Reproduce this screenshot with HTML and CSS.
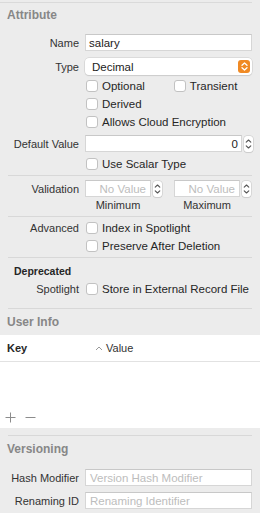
FILE: index.html
```html
<!DOCTYPE html>
<html lang="en">
<head>
  <meta charset="UTF-8">
  <title>Attribute Inspector</title>
  <link rel="stylesheet" href="styles.css">
</head>
<body>
  <div class="inspector">
    <div class="topline"></div>

    <div class="section-title title-attribute">Attribute</div>

    <div class="row field-row name-row">
      <label class="label">Name</label>
      <div class="field"><span class="value">salary</span></div>
    </div>

    <div class="row field-row type-row">
      <label class="label">Type</label>
      <div class="popup">
        <span class="value">Decimal</span>
        <span class="popup-btn">
          <svg width="7" height="9" viewBox="0 0 7 9"><path d="M1 3.3 L3.5 1 L6 3.3 M1 5.7 L3.5 8 L6 5.7" fill="none" stroke="#fff" stroke-width="1.3" stroke-linecap="round" stroke-linejoin="round"/></svg>
        </span>
      </div>
    </div>

    <div class="row check-row first-check">
      <span class="spacer"></span>
      <span class="check-item"><span class="box"></span>Optional</span>
      <span class="check-item transient"><span class="box"></span>Transient</span>
    </div>
    <div class="row check-row">
      <span class="spacer"></span>
      <span class="check-item"><span class="box"></span>Derived</span>
    </div>
    <div class="row check-row">
      <span class="spacer"></span>
      <span class="check-item"><span class="box"></span>Allows Cloud Encryption</span>
    </div>

    <div class="row field-row default-row">
      <label class="label">Default Value</label>
      <div class="field field-num"><span class="value">0</span></div>
      <span class="stepper">
        <svg width="7" height="12" viewBox="0 0 7 12"><path d="M1.2 4.2 L3.5 2 L5.8 4.2 M1.2 7.8 L3.5 10 L5.8 7.8" fill="none" stroke="#555" stroke-width="1.1" stroke-linecap="round" stroke-linejoin="round"/></svg>
      </span>
    </div>
    <div class="row check-row scalar-row">
      <span class="spacer"></span>
      <span class="check-item"><span class="box"></span>Use Scalar Type</span>
    </div>

    <div class="sep"></div>

    <div class="row field-row validation-row">
      <label class="label">Validation</label>
      <div class="range">
        <div class="field field-small"><span class="placeholder">No Value</span></div>
        <span class="stepper">
          <svg width="7" height="12" viewBox="0 0 7 12"><path d="M1.2 4.2 L3.5 2 L5.8 4.2 M1.2 7.8 L3.5 10 L5.8 7.8" fill="none" stroke="#555" stroke-width="1.1" stroke-linecap="round" stroke-linejoin="round"/></svg>
        </span>
      </div>
      <div class="range range-max">
        <div class="field field-small"><span class="placeholder">No Value</span></div>
        <span class="stepper">
          <svg width="7" height="12" viewBox="0 0 7 12"><path d="M1.2 4.2 L3.5 2 L5.8 4.2 M1.2 7.8 L3.5 10 L5.8 7.8" fill="none" stroke="#555" stroke-width="1.1" stroke-linecap="round" stroke-linejoin="round"/></svg>
        </span>
      </div>
    </div>
    <div class="row caption-row">
      <span class="spacer"></span>
      <span class="caption">Minimum</span>
      <span class="caption caption-max">Maximum</span>
    </div>

    <div class="sep sep-validation"></div>

    <div class="row check-row advanced-row">
      <label class="label">Advanced</label>
      <span class="check-item"><span class="box"></span>Index in Spotlight</span>
    </div>
    <div class="row check-row">
      <span class="spacer"></span>
      <span class="check-item"><span class="box"></span>Preserve After Deletion</span>
    </div>

    <div class="sep sep-advanced"></div>

    <div class="subtitle">Deprecated</div>
    <div class="row check-row">
      <label class="label">Spotlight</label>
      <span class="check-item"><span class="box"></span>Store in External Record File</span>
    </div>

    <div class="sep sep-deprecated"></div>

    <div class="section-title title-userinfo">User Info</div>

    <div class="table">
      <div class="table-head">
        <span class="col-key">Key</span>
        <span class="col-value">
          <svg width="8" height="5" viewBox="0 0 8 5"><path d="M1 4 L4 1 L7 4" fill="none" stroke="#9a9a9a" stroke-width="1"/></svg>
          Value
        </span>
      </div>
      <div class="table-body"></div>
      <div class="table-foot">
        <svg class="tool" width="11" height="11" viewBox="0 0 11 11"><path d="M5.5 0.5 V10.5 M0.5 5.5 H10.5" stroke="#8c8c8c" stroke-width="1"/></svg>
        <svg class="tool" width="11" height="11" viewBox="0 0 11 11"><path d="M0.5 5.5 H10.5" stroke="#8c8c8c" stroke-width="1"/></svg>
      </div>
    </div>

    <div class="sep sep-versioning"></div>

    <div class="section-title title-versioning">Versioning</div>

    <div class="row field-row hash-row">
      <label class="label">Hash Modifier</label>
      <div class="field"><span class="placeholder">Version Hash Modifier</span></div>
    </div>
    <div class="row field-row renaming-row">
      <label class="label">Renaming ID</label>
      <div class="field"><span class="placeholder">Renaming Identifier</span></div>
    </div>
  </div>
</body>
</html>
```

FILE: styles.css
```css
body {
  margin: 0;
  padding: 0;
  background-color: #ececec;
  font-family: "Liberation Sans", Arial, sans-serif;
  color: #262626;
}
.inspector {
  width: 260px;
  height: 513px;
  overflow: hidden;
}
.topline {
  height: 2px;
  border-bottom: 1px solid #dadada;
  margin-right: 8px;
}
.section-title {
  height: 25px;
  line-height: 25px;
  padding-left: 7px;
  font-size: 12px;
  font-weight: bold;
  color: #878787;
}
.row {
  display: flex;
  align-items: center;
}
.label,
.spacer {
  flex: none;
  width: 79px;
  margin-right: 6px;
  text-align: right;
  font-size: 11px;
  color: #333;
}
.field-row {
  height: 17px;
}
.name-row {
  margin-top: 6px;
}
.type-row {
  margin-top: 7px;
}
.field {
  box-sizing: border-box;
  width: 167px;
  height: 17px;
  background: #fff;
  border: 1px solid #d6d6d6;
  border-top-color: #c8c8c8;
  display: flex;
  align-items: center;
  padding: 0 3px;
  font-size: 11.5px;
}
.value {
  color: #222;
}
.placeholder {
  color: #bdbdbd;
}
.popup {
  box-sizing: border-box;
  width: 167px;
  height: 17px;
  background: #fff;
  border-radius: 4px;
  box-shadow: 0 0 0 0.5px #c9c9c9, 0 1px 1px rgba(0, 0, 0, 0.12);
  display: flex;
  align-items: center;
  justify-content: space-between;
  padding: 0 2px 0 7px;
  font-size: 11.5px;
}
.popup-btn {
  width: 12px;
  height: 13px;
  border-radius: 3px;
  background: #f08a24;
  display: flex;
  align-items: center;
  justify-content: center;
}
.check-row {
  height: 18px;
}
.first-check {
  margin-top: 2px;
}
.check-item {
  display: flex;
  align-items: center;
  font-size: 11.5px;
  color: #262626;
  white-space: nowrap;
}
.box {
  box-sizing: border-box;
  width: 12px;
  height: 12px;
  margin-left: 1px;
  margin-right: 4px;
  background: #fff;
  border: 1px solid #c2c2c2;
  border-radius: 3px;
}
.transient {
  margin-left: 28px;
}
.default-row {
  margin-top: 4px;
}
.field-num {
  width: 157px;
  justify-content: flex-end;
}
.stepper {
  box-sizing: border-box;
  width: 9px;
  height: 16px;
  margin-left: 2px;
  background: #fff;
  border-radius: 3px;
  box-shadow: 0 0 0 0.5px #c4c4c4, 0 1px 1px rgba(0, 0, 0, 0.1);
  display: flex;
  align-items: center;
  justify-content: center;
}
.scalar-row {
  margin-top: 3px;
}
.sep {
  height: 1px;
  margin: 2px 8px 0 8px;
  background: #d8d8d8;
}
.validation-row {
  margin-top: 4px;
}
.range {
  display: flex;
  align-items: center;
}
.range-max {
  margin-left: 12px;
}
.field-small {
  width: 66px;
  justify-content: flex-end;
  padding-right: 4px;
}
.caption-row {
  height: 16px;
}
.caption {
  width: 66px;
  text-align: center;
  font-size: 11px;
  color: #333;
}
.caption-max {
  margin-left: 23px;
}
.sep-validation {
  margin-top: 3px;
}
.advanced-row {
  margin-top: 2px;
}
.subtitle {
  height: 18px;
  line-height: 18px;
  margin-top: 4px;
  padding-left: 14px;
  font-size: 10.5px;
  font-weight: bold;
  color: #262626;
}
.sep-deprecated {
  margin-top: 10px;
}
.title-userinfo {
  height: 26px;
  line-height: 26px;
}
.table {
  background: #fff;
  height: 93px;
  display: flex;
  flex-direction: column;
}
.table-head {
  height: 26px;
  border-bottom: 1px solid #e2e2e2;
  display: flex;
  align-items: center;
  font-size: 11px;
}
.col-key {
  width: 88px;
  padding-left: 7px;
  font-weight: bold;
  color: #262626;
}
.col-value {
  display: flex;
  align-items: center;
  gap: 3px;
  color: #333;
}
.table-body {
  flex: 1;
}
.table-foot {
  height: 18px;
  margin-bottom: 2px;
  display: flex;
  align-items: center;
  gap: 9px;
  padding-left: 5px;
}
.sep-versioning {
  margin-top: 7px;
}
.title-versioning {
  height: 27px;
  line-height: 27px;
}
.hash-row {
  margin-top: 6px;
}
.renaming-row {
  margin-top: 6px;
}
.hash-row .field,
.renaming-row .field {
  padding-left: 4px;
}
```
